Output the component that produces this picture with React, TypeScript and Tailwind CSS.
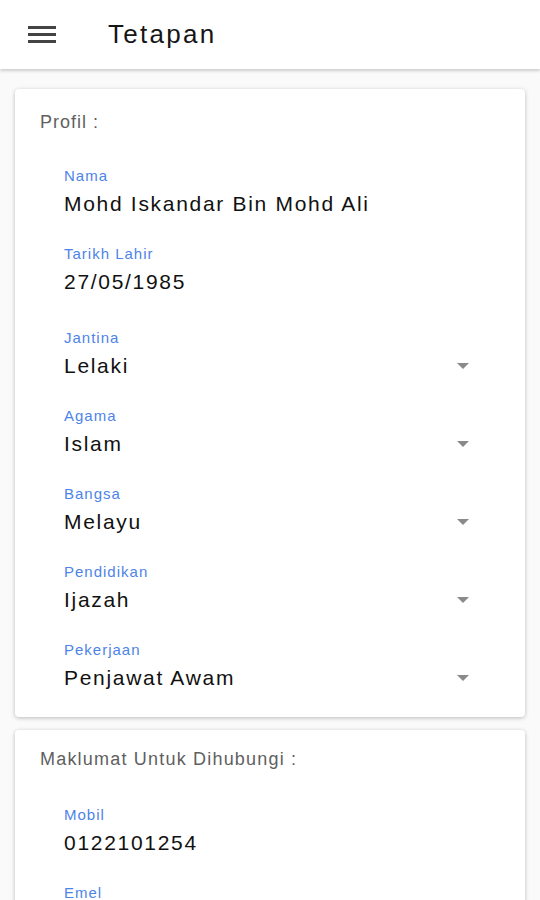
import React from "react";

type Field = { label: string; value: string; select?: boolean };

const profil: Field[] = [
  { label: "Nama", value: "Mohd Iskandar Bin Mohd Ali" },
  { label: "Tarikh Lahir", value: "27/05/1985" },
  { label: "Jantina", value: "Lelaki", select: true },
  { label: "Agama", value: "Islam", select: true },
  { label: "Bangsa", value: "Melayu", select: true },
  { label: "Pendidikan", value: "Ijazah", select: true },
  { label: "Pekerjaan", value: "Penjawat Awam", select: true },
];

const hubungi: Field[] = [
  { label: "Mobil", value: "0122101254" },
  { label: "Emel", value: "iskandar@email.com" },
];

function Caret() {
  return (
    <svg width="14" height="8" viewBox="0 0 14 8" className="mr-[55px]">
      <path d="M1 1 L13 1 L7 7 Z" fill="#8a8a8a" />
    </svg>
  );
}

function Row({ f }: { f: Field }) {
  return (
    <div className="flex h-[78px] flex-col pl-[49px]">
      <span className="text-[15px] leading-[16px] tracking-[1px] text-[#4d84e8]">{f.label}</span>
      <div className="mt-[9px] flex items-center justify-between">
        <span className="text-[21px] leading-[22px] tracking-[1.7px] text-[#111]">{f.value}</span>
        {f.select && <Caret />}
      </div>
    </div>
  );
}

export default function App() {
  return (
    <div className="h-[900px] overflow-hidden bg-[#fafafa] font-[family-name:'Liberation_Sans',Arial,sans-serif]">
      <header className="flex h-[69px] items-center bg-white shadow-[0_2px_3px_rgba(0,0,0,0.18)]">
        <div className="ml-[28px] flex w-[28px] flex-col gap-[4.5px]">
          <span className="h-[2.5px] bg-[#444]" />
          <span className="h-[2.5px] bg-[#444]" />
          <span className="h-[2.5px] bg-[#444]" />
        </div>
        <h1 className="ml-[52px] text-[26px] font-medium tracking-[2.3px] text-[#161616]">Tetapan</h1>
      </header>
      <div className="flex flex-col gap-[13px] pt-[20px]">
        <div className="mx-[15px] h-[628px] rounded-[4px] bg-white pt-[24px] shadow-[0_1px_4px_rgba(0,0,0,0.25)]">
          <div className="pl-[25px] text-[18px] leading-[18px] tracking-[1px] text-[#5f5f5f]">Profil :</div>
          <div className="mt-[37px]">
            {profil.map((f, i) => (
              <div key={f.label} className={i === 1 ? "mb-[6px]" : ""}>
                <Row f={f} />
              </div>
            ))}
          </div>
        </div>
        <div className="mx-[15px] rounded-[4px] bg-white pt-[20px] shadow-[0_1px_4px_rgba(0,0,0,0.25)]">
          <div className="pl-[25px] text-[18px] leading-[18px] tracking-[1.2px] text-[#5f5f5f]">
            Maklumat Untuk Dihubungi :
          </div>
          <div className="mt-[39px]">
            {hubungi.map((f) => (
              <Row key={f.label} f={f} />
            ))}
          </div>
        </div>
      </div>
    </div>
  );
}
